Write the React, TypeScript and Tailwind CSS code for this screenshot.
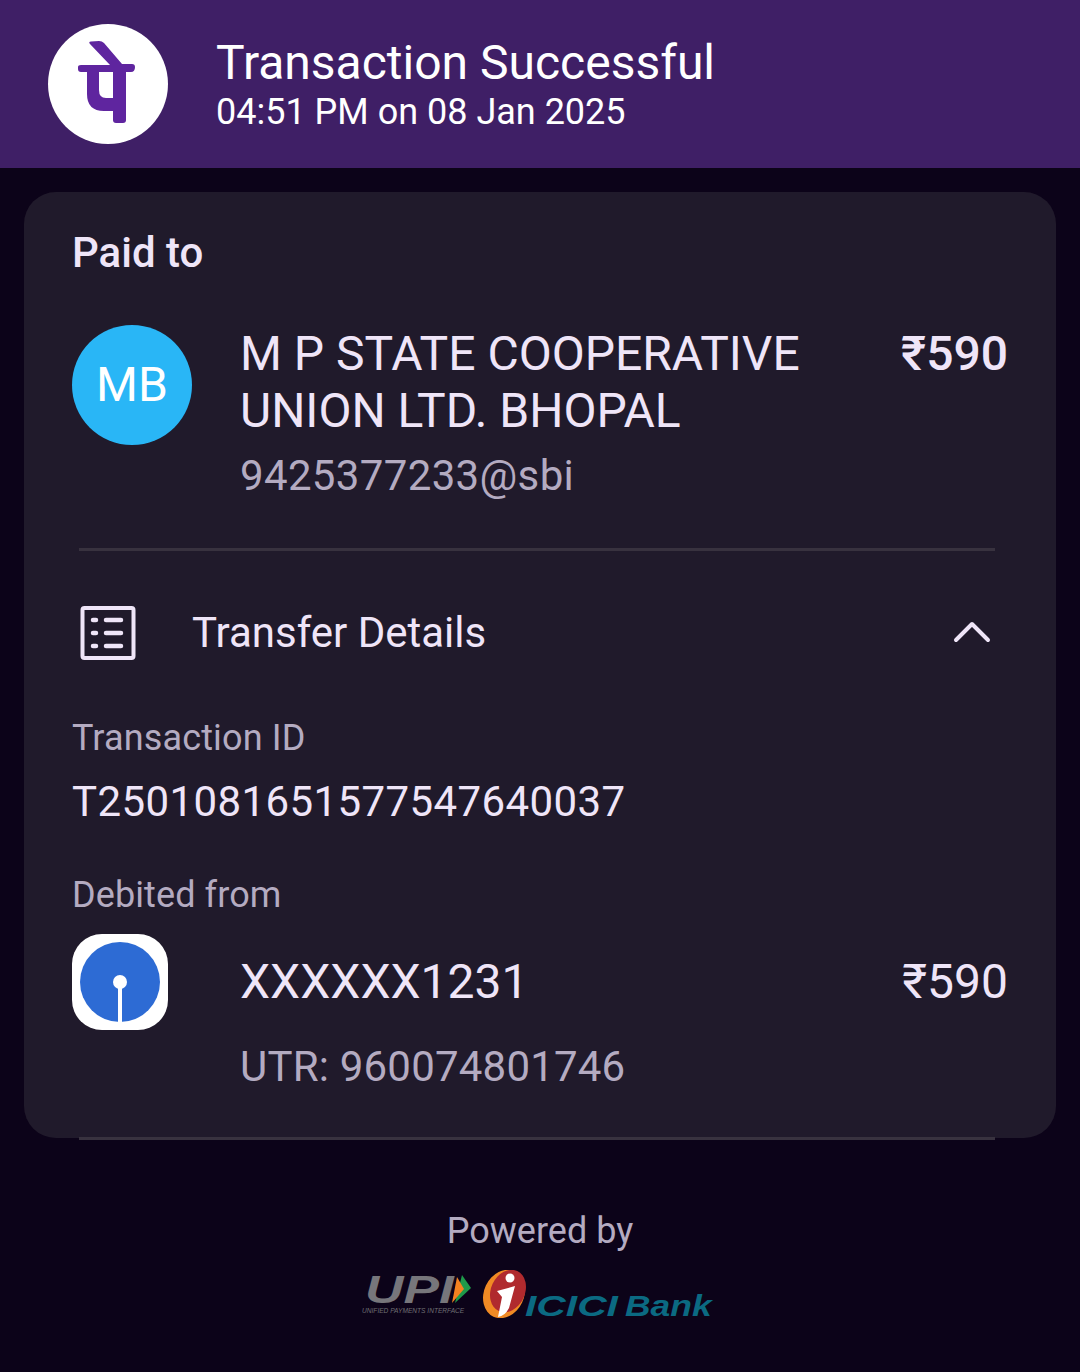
import React from "react";

// PhonePe mark, drawn as one stroke set
const PhonePeLogo = () => (
	<svg viewBox="0 0 120 120" className="w-[120px] h-[120px]">
		<circle cx="60" cy="60" r="60" fill="#ffffff" />
		<path d="M42 20 Q40 18 43 17.5 L51 17 Q54 17 56 19 L74 40 L84 40 Q87 40 87 43 Q87 48 83 48 L33 48 Q30 48 30 45 L30 43 Q30 41 33 41 L62 41 Z" fill="#5f259f" />
		<path d="M39 47 L39 70 Q39 87 56 87 L65 87 L65 74 L58 74 Q51 74 51 66 L51 47 Z" fill="#5f259f" />
		<path d="M65 47 H78 V96 Q78 99 75 99 H68 Q65 99 65 96 Z" fill="#5f259f" />
	</svg>
);

const SbiLogo = () => (
	<div className="w-24 h-24 bg-white rounded-[30px] flex items-center justify-center">
		<svg viewBox="0 0 80 80" className="w-20 h-20">
			<circle cx="40" cy="40" r="40" fill="#2d6bd4" />
			<circle cx="40" cy="40" r="7" fill="#ffffff" />
			<rect x="38" y="42" width="4" height="38" fill="#ffffff" />
		</svg>
	</div>
);

const ListIcon = () => (
	<svg viewBox="0 0 56 56" className="w-14 h-14" fill="none" stroke="#efe5f8" strokeLinecap="round">
		<rect x="2.5" y="3" width="51" height="50" rx="2" strokeWidth="4" />
		<path d="M13 15h3M13 28h3M13 41h3M26 15h15M26 28h15M26 41h15" strokeWidth="4.5" />
	</svg>
);

const Chevron = () => (
	<svg viewBox="0 0 38 24" className="w-[38px] h-6 -mt-[4px]" fill="none" stroke="#efe5f8" strokeWidth="4" strokeLinecap="round" strokeLinejoin="round">
		<path d="M3 21 L19 5 L35 21" />
	</svg>
);

const PartnerLogos = () => (
	<div className="flex items-start h-[56px] pl-[362px] mt-[15px]">
		{/* UPI */}
		<div className="w-[121px] h-[48px] relative shrink-0">
			<span className="absolute left-[3px] top-[6px] origin-left scale-x-[1.4] text-[38px] leading-[28px] font-bold italic text-[#77767b] font-['Liberation_Sans',sans-serif]">UPI</span>
			<svg viewBox="0 0 19 29" className="absolute left-[90px] top-[5px] w-[19px] h-[29px]">
				<path d="M10 0 L19 13 L3 28 Z" fill="#1f9a4a" />
				<path d="M5 2 L12 14 L0 28 Z" fill="#f58220" />
			</svg>
			<span className="absolute left-0 top-[37px] whitespace-nowrap text-[6.6px] leading-[7px] italic text-[#6f6e73] font-['Liberation_Sans',sans-serif]">UNIFIED PAYMENTS INTERFACE</span>
		</div>
		{/* ICICI */}
		<svg viewBox="0 0 44 48" className="w-11 h-12 shrink-0">
			<ellipse cx="21" cy="24" rx="20" ry="25" transform="rotate(25 21 24)" fill="#f08a24" />
			<ellipse cx="25" cy="21" rx="17" ry="22" transform="rotate(25 25 21)" fill="#b02a2e" />
			<circle cx="27" cy="8" r="4.5" fill="#ffffff" />
			<path d="M14 21 L32 16 L26 38 Q22 46 15 47 L19 27 Z" fill="#ffffff" />
		</svg>
		<div className="flex mt-[23px] -ml-[2px] text-[30px] leading-[26px] font-bold italic text-[#0b6a82] font-['Liberation_Sans',sans-serif] whitespace-nowrap">
			<span className="w-[100px] origin-left scale-x-[1.36]">ICICI</span>
			<span className="origin-left scale-x-[1.18]">Bank</span>
		</div>
	</div>
);

export default function App() {
	return (
		<div className="w-[1080px] h-[1372px] overflow-hidden bg-[#0c0319] font-['Roboto',sans-serif] text-[#efe5f8]">
			{/* Header */}
			<div className="h-[168px] bg-[#3f1f66] flex items-center pl-12">
				<PhonePeLogo />
				<div className="ml-[48px] -mt-[2px] text-white">
					<div className="text-[48px] leading-[56px]">Transaction Successful</div>
					<div className="text-[36px] leading-[40px] mt-[1px]">04:51 PM on 08 Jan 2025</div>
				</div>
			</div>

			{/* Card */}
			<div className="mx-6 mt-6 h-[946px] bg-[#201a2b] rounded-[32px] pt-[32px] relative">
				<div className="px-12 text-[42px] leading-[58px] font-medium">Paid to</div>

				<div className="flex pl-12 pr-[48px] mt-[43px]">
					<div className="w-[120px] h-[120px] rounded-full bg-[#29b6f6] flex items-center justify-center text-[48px] text-white shrink-0">MB</div>
					<div className="ml-[48px] flex-1">
						<div className="text-[48px] leading-[57px]">M P STATE COOPERATIVE<br />UNION LTD. BHOPAL</div>
						<div className="text-[42px] leading-[50px] mt-[12px] tracking-[0.35px] text-[#b4abc1]">9425377233@sbi</div>
					</div>
					<div className="text-[48px] leading-[57px] font-medium">₹590</div>
				</div>

				<div className="h-[3px] bg-[#38323f] ml-[55px] mr-[61px] mt-[47px]" />

				<div className="flex items-center pl-[56px] pr-[65px] mt-[53px]">
					<ListIcon />
					<div className="ml-[56px] flex-1 text-[42px] leading-[56px] mt-[1px]">Transfer Details</div>
					<Chevron />
				</div>

				<div className="px-12 mt-[53px]">
					<div className="text-[36px] leading-[48px] tracking-[0.15px] text-[#b4abc1]">Transaction ID</div>
					<div className="text-[42px] leading-[56px] mt-[12px] tracking-[0.4px]">T2501081651577547640037</div>
					<div className="text-[36px] leading-[48px] tracking-[0.1px] text-[#b4abc1] mt-[41px]">Debited from</div>
				</div>

				<div className="flex pl-12 pr-[48px] mt-[15px]">
					<SbiLogo />
					<div className="ml-[72px] flex-1">
						<div className="text-[48px] leading-[57px] mt-[19px]">XXXXXX1231</div>
						<div className="text-[42px] leading-[50px] mt-[32px] tracking-[0.2px] text-[#b4abc1]">UTR: 960074801746</div>
					</div>
					<div className="text-[48px] leading-[57px] mt-[19px]">₹590</div>
				</div>

				<div className="absolute left-[55px] right-[61px] bottom-[-2px] h-[3px] bg-[#38323f]" />
			</div>

			{/* Footer */}
			<div className="text-center text-[36px] leading-[48px] text-[#b4abc1] mt-[69px]">Powered by</div>
			<PartnerLogos />
		</div>
	);
}
